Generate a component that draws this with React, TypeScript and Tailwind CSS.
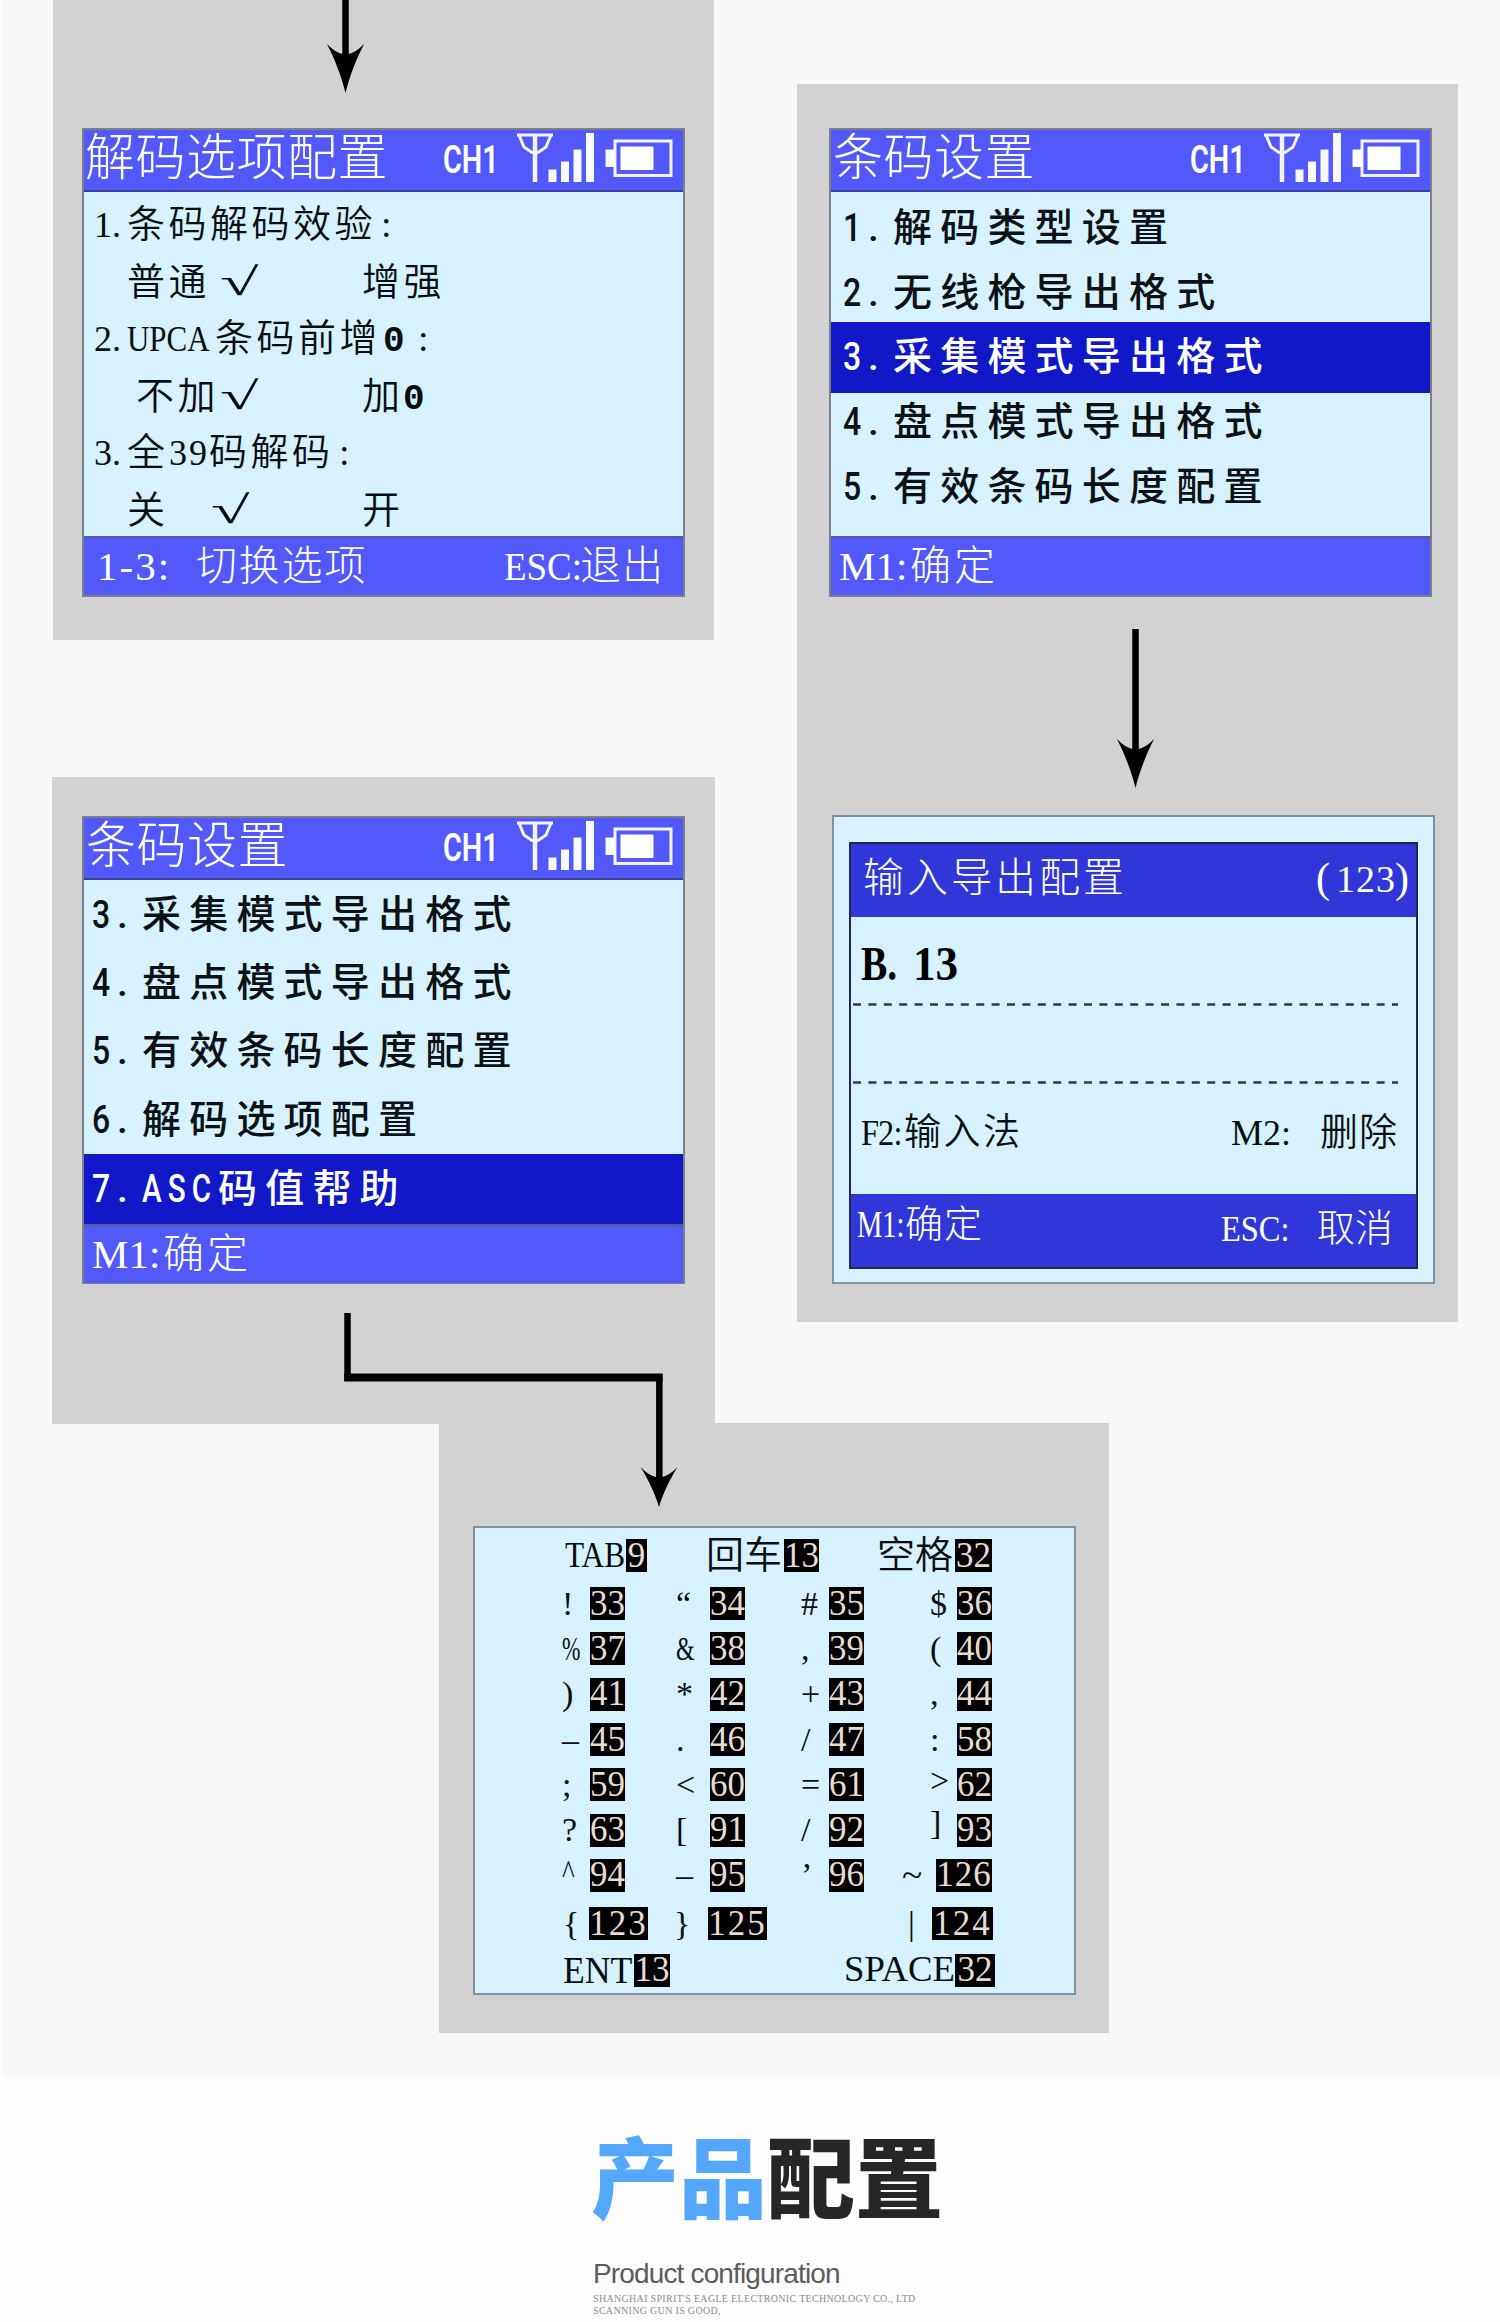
import React from 'react';

interface RunProps {
    className?: string;
    children?: React.ReactNode;
}

interface AsciiCell {
    symbol: string;
    code: string;
    // overrides for glyphs that are drawn narrower or higher than the rest
    fit?: string;
}

const PIXEL_FONT = "font-['Liberation_Serif','Noto_Sans_CJK_SC',serif]";
const MENU_FONT = "font-[Roboto,'Noto_Sans_CJK_SC',sans-serif]";

const ASCII_ROWS: AsciiCell[][] = [
    [{ symbol: '!', code: '33' }, { symbol: '“', code: '34' }, { symbol: '#', code: '35' }, { symbol: '$', code: '36' }],
    [{ symbol: '%', code: '37', fit: 'origin-left scale-x-[.65]' }, { symbol: '&', code: '38', fit: 'origin-left scale-x-[.7]' }, { symbol: ',', code: '39' }, { symbol: '(', code: '40' }],
    [{ symbol: ')', code: '41' }, { symbol: '*', code: '42' }, { symbol: '+', code: '43' }, { symbol: ',', code: '44' }],
    [{ symbol: '–', code: '45' }, { symbol: '.', code: '46' }, { symbol: '/', code: '47' }, { symbol: ':', code: '58' }],
    [{ symbol: ';', code: '59' }, { symbol: '<', code: '60' }, { symbol: '=', code: '61' }, { symbol: '>', code: '62', fit: 'relative -top-1' }],
    [{ symbol: '?', code: '63' }, { symbol: '[', code: '91' }, { symbol: '/', code: '92' }, { symbol: ']', code: '93', fit: 'relative -top-[7px]' }],
    [{ symbol: '^', code: '94', fit: 'origin-left scale-x-[.8] relative -top-[3px]' }, { symbol: '–', code: '95' }, { symbol: '’', code: '96' }, { symbol: '~', code: '126', fit: 'origin-left scale-x-[1.1]' }],
];

const CELL_WIDTHS = ['w-[114px]', 'w-[125px]', 'w-[64px]', 'w-[127px] justify-end'];
const SYMBOL_WIDTHS = ['w-7', 'w-[34px]', 'w-[28px]', 'w-[27px]'];

// One piece of text that starts at a fixed column of its row
const Run: React.FC<RunProps> = ({ className = '', children }) => (
    <span className={`shrink-0 whitespace-pre ${className}`}>{children}</span>
);

const Check: React.FC<RunProps> = ({ className = '' }) => (
    <Run className={`origin-left scale-x-[1.8] text-[39px] tracking-normal ${className}`}>√</Run>
);

const ArrowHead: React.FC<{ x: number; y: number; length: number }> = ({ x, y, length }) => (
    <path
        d={`M${x} ${y + length} C${x - 4} ${y + length * 0.66} ${x - 11} ${y + length * 0.3} ${x - 18.5} ${y} Q${x - 11} ${y + 8} ${x - 3} ${y + 10} H${x + 3} Q${x + 11} ${y + 8} ${x + 18.5} ${y} C${x + 11} ${y + length * 0.3} ${x + 4} ${y + length * 0.66} ${x} ${y + length} Z`}
        fill="#000"
    />
);

const StatusIcons: React.FC = () => (
    <svg width="160" height="52" viewBox="0 0 160 52" className="shrink-0">
        {/* antenna */}
        <path d="M4 3 H40 M6 3 L11 15 L19 20.500 H25 L33 15 L38 3" fill="none" stroke="#f4f4ff" strokeWidth="3" />
        <path d="M22 2 V50" stroke="#f4f4ff" strokeWidth="4.500" />
        {/* signal bars */}
        <g fill="#f8f8ff">
            <rect x="35.500" y="37.500" width="8" height="12.500" />
            <rect x="48" y="29.500" width="8" height="20.500" />
            <rect x="60.500" y="17.500" width="8" height="32.500" />
            <rect x="73" y="1" width="8" height="49" />
        </g>
        {/* battery */}
        <rect x="102" y="9" width="56" height="34.500" fill="none" stroke="#f4f4ff" strokeWidth="3" />
        <rect x="107.500" y="14.500" width="33" height="23.500" fill="#fff" />
        <rect x="92.500" y="17.500" width="9" height="17.500" fill="#fff" />
    </svg>
);

const ScreenHeader: React.FC<{ title: string; className?: string }> = ({ title, className = '' }) => (
    <div className={`flex h-[62px] items-start justify-between border-b-2 border-[#3c3f9c] bg-[#5159fb] pr-2.5 text-white ${className}`}>
        <span className={`${PIXEL_FONT} text-[50px] font-light leading-[57px] tracking-[.500px] whitespace-nowrap`}>{title}</span>
        <div className="flex items-start pt-[2px]">
            <span className="mr-[17px] mt-[5px] w-[53px] origin-left font-[Roboto,sans-serif] text-[39px] font-semibold leading-[46px] scale-x-[.74] whitespace-nowrap">
                CH1
            </span>
            <StatusIcons />
        </div>
    </div>
);

const ScreenFooter: React.FC<{ children: React.ReactNode }> = ({ children }) => (
    <div className={`flex h-[59px] items-baseline border-t-2 border-[#5a5a98] bg-[#5159fb] text-[41px] leading-[57px] font-light text-white ${PIXEL_FONT}`}>
        {children}
    </div>
);

const ConfirmFooter: React.FC = () => (
    <ScreenFooter>
        <Run className="ml-2 w-[71px]">M1:</Run>
        <Run className="tracking-[3px]">确定</Run>
    </ScreenFooter>
);

const MenuItem: React.FC<{ index: number; prefix?: string; label: string; active?: boolean; className?: string }> = ({
    index,
    prefix,
    label,
    active,
    className = '',
}) => (
    <div className={`flex items-center ${active ? 'bg-[#1018c8] text-white' : 'text-[#0b1114]'} ${MENU_FONT} text-[39px] font-medium ${className}`}>
        <Run className="w-[25px] origin-left scale-x-[.82]">{index}</Run>
        <Run className="w-[25px]">.</Run>
        {prefix && <Run className="w-[76px] origin-left scale-x-[.76] tracking-[8px]">{prefix}</Run>}
        <Run className="tracking-[8.200px]">{label}</Run>
    </div>
);

const DecodeOptionsScreen: React.FC = () => (
    <div className="h-[469px] w-[603px] border-2 border-[#7c7f88] bg-[#d6f2ff]">
        <ScreenHeader title="解码选项配置" className="pl-px" />
        <div className={`flex h-[344px] flex-col pt-[4px] pl-[10px] text-[38px] font-[350] leading-[57px] tracking-[3.500px] text-[#080e10] ${PIXEL_FONT} [&>div]:flex [&>div]:h-[57px] [&>div]:items-baseline`}>
            <div>
                <Run className="w-[33px] text-[36px] tracking-normal">1.</Run>
                <Run className="w-[254px]">条码解码效验</Run>
                <Run className="tracking-normal">:</Run>
            </div>
            <div>
                <Run className="ml-[33px] w-[93px]">普通</Run>
                <Check className="w-[142px]" />
                <Run>增强</Run>
            </div>
            <div>
                <Run className="w-[33px] text-[36px] tracking-normal">2.</Run>
                <Run className="w-[122px] origin-left scale-x-[.86] text-[36px] tracking-normal">UPCA</Run>
                <Run className="-ml-[34px] w-[168px]">条码前增</Run>
                <Run className="w-[35px] font-['Liberation_Mono',monospace] text-[36px] font-bold tracking-normal">0</Run>
                <Run>:</Run>
            </div>
            <div>
                <Run className="ml-[42px] w-[84px]">不加</Run>
                <Check className="w-[142px]" />
                <Run className="w-[41px]">加</Run>
                <Run className="font-['Liberation_Mono',monospace] text-[36px] font-bold">0</Run>
            </div>
            <div>
                <Run className="w-[33px] text-[36px] tracking-normal">3.</Run>
                <Run className="w-[42px]">全</Run>
                <Run className="w-[40px] text-[36px] tracking-[2px]">39</Run>
                <Run className="w-[130px]">码解码</Run>
                <Run>:</Run>
            </div>
            <div>
                <Run className="ml-[33px] w-[84px]">关</Run>
                <Check className="w-[151px]" />
                <Run>开</Run>
            </div>
        </div>
        <ScreenFooter>
            <Run className="ml-[13px] w-[99px] tracking-[2px]">1-3:</Run>
            <Run className="w-[308px] tracking-[1.800px]">切换选项</Run>
            <Run className="w-[76px] origin-left scale-x-[.9]">ESC:</Run>
            <Run className="tracking-[1px]">退出</Run>
        </ScreenFooter>
    </div>
);

const BarcodeMenuScreen: React.FC = () => (
    <div className="h-[469px] w-[603px] border-2 border-[#7c7f88] bg-[#d6f2ff]">
        <ScreenHeader title="条码设置" className="pl-0.5" />
        <div className="flex h-[344px] flex-col pt-[4px]">
            <MenuItem index={1} label="解码类型设置" className="h-[65px] pl-3" />
            <MenuItem index={2} label="无线枪导出格式" className="h-[64px] pl-3" />
            <MenuItem index={3} label="采集模式导出格式" active className="-my-[3px] h-[71px] pl-3" />
            <MenuItem index={4} label="盘点模式导出格式" className="h-[65px] pl-3" />
            <MenuItem index={5} label="有效条码长度配置" className="h-[65px] pl-3" />
        </div>
        <ConfirmFooter />
    </div>
);

const BarcodeMenuEndScreen: React.FC = () => (
    <div className="h-[468px] w-[603px] border-2 border-[#7c7f88] bg-[#d6f2ff]">
        <ScreenHeader title="条码设置" className="pl-0.5" />
        <div className="flex h-[344px] flex-col pt-px">
            <MenuItem index={3} label="采集模式导出格式" className="h-[68px] pl-2" />
            <MenuItem index={4} label="盘点模式导出格式" className="h-[68px] pl-2" />
            <MenuItem index={5} label="有效条码长度配置" className="h-[69px] pl-2" />
            <MenuItem index={6} label="解码选项配置" className="h-[68px] pl-2" />
            <MenuItem index={7} prefix="ASC" label="码值帮助" active className="h-[70px] pl-2" />
        </div>
        <ConfirmFooter />
    </div>
);

const DashedLine: React.FC = () => (
    <svg width="545" height="3" className="ml-0.5">
        <path d="M0 1.500 H545" stroke="#2c3a44" strokeWidth="2.500" strokeDasharray="8 7.400" />
    </svg>
);

const ExportInputScreen: React.FC = () => (
    <div className="h-[469px] w-[603px] border-2 border-[#8590a0] bg-[#d6f2ff] px-[15px] pt-[25px]">
        <div className={`h-[427px] border-2 border-[#23264c] text-[38px] font-light ${PIXEL_FONT}`}>
            <div className="flex h-[73px] items-baseline bg-[#3037d8] pl-3 leading-[68px] text-white">
                <Run className="w-[453px] text-[41px] tracking-[3px]">输入导出配置</Run>
                <Run className="w-[20px] text-[42px]">(</Run>
                <Run className="w-[59px] tracking-[1px]">123</Run>
                <Run className="text-[42px]">)</Run>
            </div>
            <div className="h-[86px] pl-[10px] pt-[21px] text-[48px] leading-[52px] font-bold text-black">
                <div className="flex items-baseline">
                    <Run className="w-[52px] origin-left scale-x-[.82]">B.</Run>
                    <Run className="origin-left scale-x-[.94]">13</Run>
                </div>
            </div>
            <DashedLine />
            <div className="h-[75px]" />
            <DashedLine />
            <div className="flex h-[110px] items-baseline pl-[10px] leading-[97px] font-[350] text-[#080e10]">
                <Run className="w-[43px] origin-left scale-x-[.9] text-[36px] -tracking-[1px]">F2:</Run>
                <Run className="w-[327px] text-[37px] tracking-[2.500px]">输入法</Run>
                <Run className="w-[89px] text-[36px]">M2:</Run>
                <Run className="tracking-[1px]">删除</Run>
            </div>
            <div className="flex h-[73px] items-baseline bg-[#3037d8] pl-[6px] leading-[60px] text-white">
                <Run className="w-[48px] origin-left scale-x-[.75]">M1:</Run>
                <Run className="w-[316px] tracking-[1px]">确定</Run>
                <Run className="relative top-1 w-[96px] origin-left scale-x-[.9] text-[36px]">ESC:</Run>
                <Run className="relative top-1 text-[38px]">取消</Run>
            </div>
        </div>
    </div>
);

const Code: React.FC<RunProps> = ({ className = 'w-[35px]', children }) => (
    <span className={`flex h-[33px] shrink-0 items-center justify-center bg-black text-[35px] leading-[40px] text-[#e6dcd2] ${className}`}>
        {children}
    </span>
);

const AsciiScreen: React.FC = () => (
    <div className={`h-[469px] w-[603px] border-2 border-[#8590a0] bg-[#d6f2ff] text-[36px] font-[350] text-[#080e10] ${PIXEL_FONT}`}>
        <div className="flex h-[53px] items-center pl-[90px] pt-0.5 leading-[51px]">
            <Run className="w-[61px] origin-left scale-x-[.87]">TAB</Run>
            <Code className="mr-[59px] w-[21px]">9</Code>
            <Run className="w-[78px] text-[38px]">回车</Run>
            <Code className="mr-[58px] w-[35px]">13</Code>
            <Run className="w-[78px] text-[38px]">空格</Run>
            <Code className="w-[37px]">32</Code>
        </div>
        {ASCII_ROWS.map((row, rowIndex) => (
            <div key={rowIndex} className="flex h-[45.300px] items-center pl-[87px] leading-[44px]">
                {row.map((cell, i) => (
                    <div key={cell.code} className={`flex shrink-0 items-center ${CELL_WIDTHS[i]}`}>
                        <Run className={`text-[34px] ${cell.code === '126' ? 'w-[34px]' : SYMBOL_WIDTHS[i]} ${cell.fit ?? ''}`}>{cell.symbol}</Run>
                        <Code className={cell.code.length > 2 ? 'w-[56px] tracking-[1px]' : 'w-[35px]'}>{cell.code}</Code>
                    </div>
                ))}
            </div>
        ))}
        <div className="flex h-[47px] items-center pl-[88px] pt-1 leading-[40px]">
            <Run className="w-[26px] text-[34px]">{'{'}</Run>
            <Code className="w-[59px] tracking-[2px]">123</Code>
            <Run className="ml-[26px] w-[34px] text-[34px]">{'}'}</Run>
            <Code className="w-[59px] tracking-[2px]">125</Code>
            <Run className="ml-[141px] w-[24px] text-[34px]">|</Run>
            <Code className="w-[61px] tracking-[2px]">124</Code>
        </div>
        <div className="flex h-[46px] items-center pl-[88px] pt-1 leading-[42px]">
            <Run className="w-[71px] origin-left scale-x-[.94] text-[38px]">ENT</Run>
            <Code className="w-[36px]">13</Code>
            <Run className="ml-[174px] w-[111px] origin-left scale-x-[1.050] text-[35px]">SPACE</Run>
            <Code className="w-[40px]">32</Code>
        </div>
    </div>
);

const App: React.FC = () => {
    return (
        <div className="h-[2322px] w-[1500px] overflow-hidden border-l-3 border-[#fdfdfd] bg-[#f8f8f8]">
            <div className="flex h-[1423px] items-start">
                <div className="ml-[49px] w-[663px] shrink-0">
                    <div className="ml-px h-[640px] w-[661px] bg-[#d2d2d2] pl-[29px]">
                        <svg width="603" height="128" className="block">
                            <path d="M263.500 0 V60" stroke="#000" strokeWidth="6.500" />
                            <ArrowHead x={263.5} y={44} length={49} />
                        </svg>
                        <DecodeOptionsScreen />
                    </div>
                    <div className="relative mt-[137px] h-[647px] bg-[#d2d2d2] pl-[30px] pt-[39px]">
                        <BarcodeMenuEndScreen />
                        {/* elbow connector running down into the ASCII panel */}
                        <svg width="620" height="230" className="absolute left-0 top-[536px] z-10">
                            <path d="M295.500 0 V68" stroke="#000" strokeWidth="6.500" />
                            <path d="M292.300 64.500 H610.500" stroke="#000" strokeWidth="8" />
                            <path d="M607.300 61 V170" stroke="#000" strokeWidth="6.500" />
                        </svg>
                        <svg width="40" height="42" className="absolute left-[587px] top-[690px] z-10">
                            <ArrowHead x={20} y={0} length={40} />
                        </svg>
                    </div>
                </div>
                <div className="ml-[82px] mt-[84px] h-[1238px] w-[661px] shrink-0 bg-[#d2d2d2] pl-[32px] pt-[44px]">
                    <BarcodeMenuScreen />
                    <svg width="603" height="218" className="block">
                        <path d="M306.500 32 V155" stroke="#000" strokeWidth="6.500" />
                        <ArrowHead x={306.5} y={142} length={49} />
                    </svg>
                    <div className="ml-[3px]">
                        <ExportInputScreen />
                    </div>
                </div>
            </div>
            <div className="ml-[436px] h-[610px] w-[670px] bg-[#d2d2d2] pl-[34px] pt-[103px]">
                <AsciiScreen />
            </div>
            <div className="mt-[44px] h-[245px] bg-[#fdfdfd] pl-[588px] pt-[47px]">
                <h2 className="h-[131px] whitespace-nowrap font-['Noto_Sans_CJK_SC',sans-serif] text-[88px] font-black leading-[97px] text-[#262626]">
                    <span className="text-[#54a7fb]">产品</span>配置
                </h2>
                <p className="h-[38px] whitespace-nowrap pl-0.5 font-['Liberation_Sans',sans-serif] text-[28px] leading-[38px] tracking-[-.850px] text-[#5c5c5c]">Product configuration</p>
                <p className="whitespace-nowrap pl-0.5 font-['Liberation_Serif',serif] text-[10px] leading-[11.500px] tracking-[.320px] text-[#8c8c8c]">
                    SHANGHAI SPIRIT'S EAGLE ELECTRONIC TECHNOLOGY CO., LTD
                    <br />
                    SCANNING GUN IS GOOD,
                </p>
            </div>
        </div>
    );
};

export default App;
